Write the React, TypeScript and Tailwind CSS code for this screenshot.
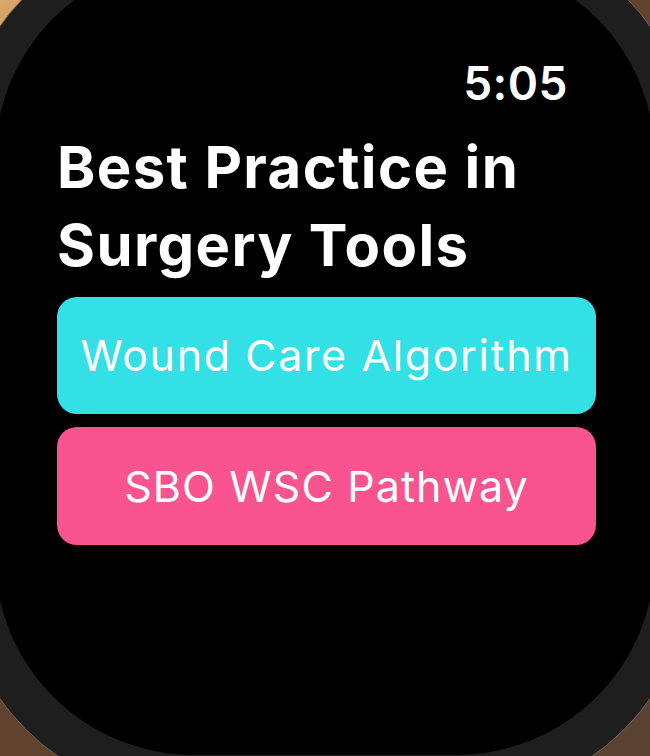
import React from "react";

export default function App() {
  return (
    <div className="relative w-[650px] h-[756px] overflow-hidden bg-[linear-gradient(135deg,#d9ab6e_0%,#c4905a_6%,#6e4429_16%,#5e4230_60%,#5a4232_100%)]">
      <div className="absolute left-[-45px] top-[-75px] w-[740px] h-[875px] rounded-[240px] bg-[#1e1e1e] border border-[#7a604c]">
        <div className="absolute left-[39px] top-[34px] w-[660px] h-[795px] rounded-[199px] bg-black">
          <div
            className="flex flex-col pl-[62px] pr-[59px] pt-[100px] text-white"
            style={{ fontFamily: "Inter, 'Noto Sans', sans-serif" }}
          >
            <div className="flex justify-end pr-[28px]">
              <span className="text-[46px] leading-[46px] font-semibold tracking-[0.5px]">5:05</span>
            </div>
            <h1 className="mt-[22px] text-[58px] leading-[78px] font-bold tracking-[1.4px]">
              Best Practice in
              <br />
              Surgery Tools
            </h1>
            <div className="mt-[13px] flex flex-col gap-[13px]">
              <button className="h-[117px] w-full rounded-[20px] bg-[#33e0e6] text-white text-[43px] leading-none font-normal tracking-[1.6px] flex items-center justify-center">
                Wound Care Algorithm
              </button>
              <button className="h-[118px] w-full rounded-[20px] bg-[#f9548f] text-white text-[43px] leading-none font-normal tracking-[1.1px] flex items-center justify-center">
                SBO WSC Pathway
              </button>
            </div>
          </div>
        </div>
      </div>
    </div>
  );
}
